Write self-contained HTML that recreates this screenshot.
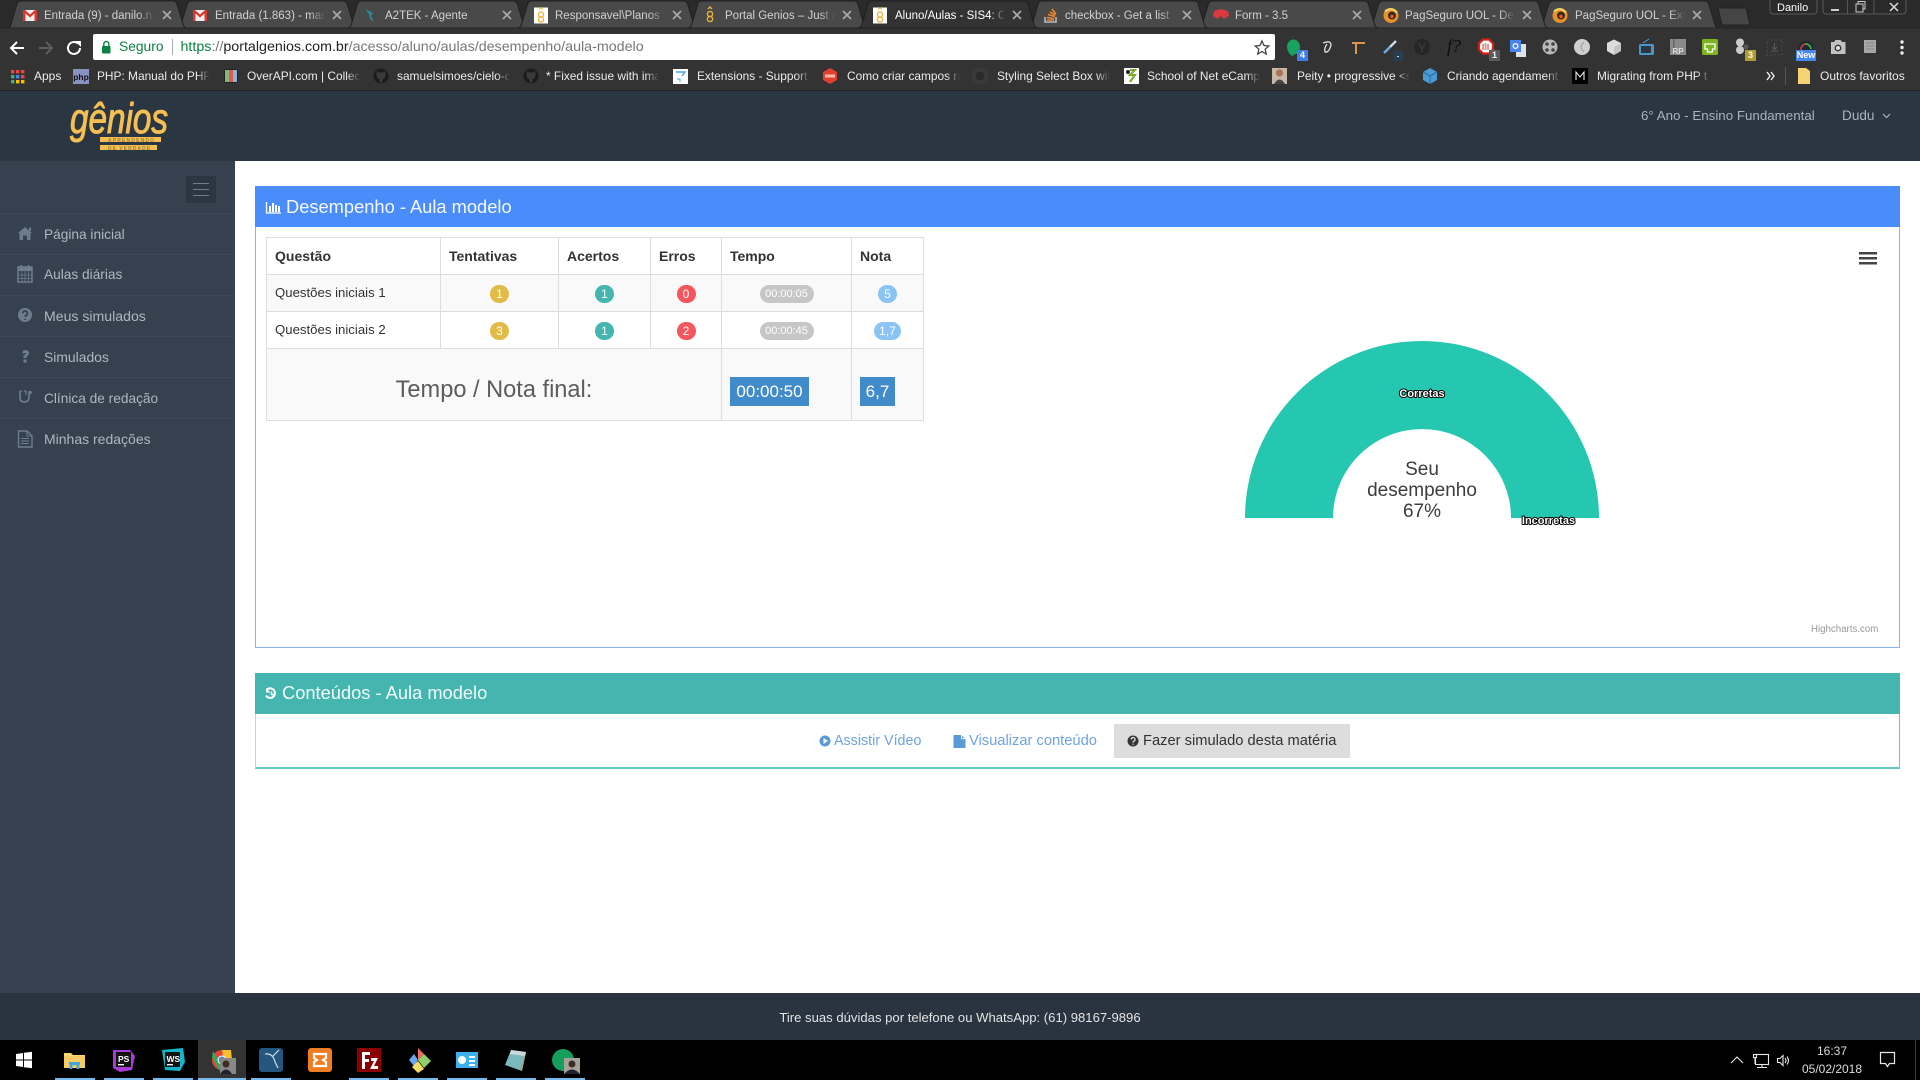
<!DOCTYPE html>
<html lang="pt-BR">
<head>
<meta charset="utf-8">
<title>Aluno/Aulas - SIS4</title>
<style>
html,body{margin:0;padding:0;width:1920px;height:1080px;overflow:hidden;background:#fff;font-family:"Liberation Sans",sans-serif;color:#333}
*{box-sizing:border-box}
.a{position:absolute}
.t{position:absolute;white-space:nowrap;line-height:20px;height:20px}
.tab{position:absolute;top:6px;width:110px;overflow:hidden;white-space:nowrap;font-size:11.5px;line-height:20px;height:20px;color:#d2d2d2;-webkit-mask-image:linear-gradient(to right,#000 86%,transparent);mask-image:linear-gradient(to right,#000 86%,transparent)}
.bm{position:absolute;top:66px;width:113px;overflow:hidden;white-space:nowrap;font-size:11.9px;line-height:20px;height:20px;color:#ececec;-webkit-mask-image:linear-gradient(to right,#000 88%,transparent);mask-image:linear-gradient(to right,#000 88%,transparent)}
.side{position:absolute;left:44px;font-size:13.7px;line-height:20px;color:#aeb6c1;white-space:nowrap}
.sep{position:absolute;left:0;width:235px;height:1px;background:#3d4957}
table{position:absolute;left:266px;top:237px;width:657px;border-collapse:collapse;table-layout:fixed;font-size:13.2px;color:#333}
td,th{border:1px solid #ddd;padding:0 8px;height:37px;text-align:left;vertical-align:middle}
th{font-size:14px;font-weight:bold;background:#fff}
.odd td{background:#f9f9f9}
.q{padding-bottom:2px}
.c{text-align:center;padding:0}
.b{display:inline-block;position:relative;top:1px;height:18px;line-height:18px;border-radius:9px;color:#fff;font-size:12px;text-align:center;vertical-align:middle}
.r{width:19px}
.y{background:#e2bb47}.g{background:#45b6af}.e{background:#f3565d}.u{background:#89c4f4}.p{background:#c6c6c6;width:54px;font-size:11px}
.box{display:block;background:#428bca;color:#fff;font-size:17px;height:29px;line-height:29px;text-align:center}
</style>
</head>
<body>

<!-- browser frame -->
<div class="a" style="left:0;top:0;width:1920px;height:28px;background:#2a2a2a"></div>
<div class="a" style="left:0;top:28px;width:1920px;height:63px;background:#333"></div>
<div class="a" style="left:0;top:90px;width:1920px;height:1px;background:#222"></div>

<!-- page -->
<div class="a" style="left:0;top:91px;width:1920px;height:70px;background:#2b3643"></div>
<div class="a" style="left:0;top:161px;width:235px;height:832px;background:#364150"></div>
<div class="a" style="left:0;top:993px;width:1920px;height:47px;background:#2a3340"></div>
<div class="a" style="left:0;top:1040px;width:1920px;height:40px;background:#000"></div>
<div class="a" style="left:198px;top:1040px;width:48px;height:40px;background:#333"></div>

<!-- address bar -->
<div class="a" style="left:93px;top:34px;width:1182px;height:26px;background:#fff;border-radius:2px"></div>

<!-- panels -->
<div class="a" style="left:255px;top:186px;width:1645px;height:462px;border:1px solid #8ab0ef"></div>
<div class="a" style="left:255px;top:186px;width:1645px;height:41px;background:#4b8cfb"></div>
<div class="a" style="left:255px;top:673px;width:1645px;height:96px;border:1px solid #c5d4d2;border-bottom:2px solid #63c9c0;border-right:1px solid #63c9c0"></div>
<div class="a" style="left:255px;top:673px;width:1645px;height:41px;background:#45b6af"></div>
<div class="a" style="left:1114px;top:724px;width:236px;height:34px;background:#ddd"></div>

<!-- sidebar -->
<div class="a" style="left:186px;top:176px;width:30px;height:27px;background:#2b3643"></div>
<div class="a" style="left:193px;top:183px;width:16px;height:1px;background:#6f7d8c"></div>
<div class="a" style="left:193px;top:189px;width:16px;height:1px;background:#6f7d8c"></div>
<div class="a" style="left:193px;top:195px;width:16px;height:1px;background:#6f7d8c"></div>
<div class="sep" style="top:213px"></div><div class="sep" style="top:254px"></div><div class="sep" style="top:295px"></div><div class="sep" style="top:336px"></div><div class="sep" style="top:377px"></div><div class="sep" style="top:418px"></div>
<div class="side" style="top:225px">Página inicial</div>
<div class="side" style="top:265px">Aulas diárias</div>
<div class="side" style="top:306px;font-size:14.1px">Meus simulados</div>
<div class="side" style="top:347px;font-size:13.9px">Simulados</div>
<div class="side" style="top:389px">Clínica de redação</div>
<div class="side" style="top:429px;font-size:14px">Minhas redações</div>

<!-- all icons / shapes -->
<svg class="a" style="left:0;top:0" width="1920" height="1080" viewBox="0 0 1920 1080" xmlns="http://www.w3.org/2000/svg">
<defs>
<path id="tb" d="M0,28 Q3,28 4,24 L10,4 Q11,1 14,1 L166,1 Q169,1 170,4 L176,24 Q177,28 180,28Z"/>
<g id="x"><path d="M-4,-4L4,4M4,-4L-4,4" stroke="#a8a8a8" stroke-width="1.7" fill="none"/></g>
<g id="gm"><rect x="-7" y="-5.5" width="14" height="11" fill="#eee"/><path d="M-7,-5.5V5.5H-4.5V-2L0,2L4.5,-2V5.5H7V-5.5H5L0,-1L-5,-5.5Z" fill="#d8392c"/></g>
<g id="gn"><rect x="-7" y="-8" width="14" height="16" fill="#fff"/><circle cy="-1" r="2.6" fill="none" stroke="#eeb53e" stroke-width="1.4"/><circle cy="4" r="2.6" fill="none" stroke="#eeb53e" stroke-width="1.4"/><path d="M-2,-6L0,-8L2,-6" stroke="#eeb53e" fill="none"/></g>
<g id="pg"><circle r="7.5" fill="#e8932a"/><circle cx="1" r="4" fill="#3a2a1c"/><path d="M-6,-4Q0,-9 6,-3" stroke="#f6d365" stroke-width="2" fill="none"/><circle cx="1" cy="1" r="1.7" fill="#ef5a28"/></g>
<g id="gh"><circle r="7.5" fill="#1c1c1c"/><path d="M-4,-5L-2,-3.5Q0,-4 2,-3.5L4,-5L4.5,-1Q4,3 1.5,3.5V6.5H-1.5V3.5Q-4,3 -4.5,-1Z" fill="#3a3a3a"/></g>
</defs>

<!-- tabs -->
<g fill="#494949" stroke="#1f1f1f" stroke-width="1">
<use href="#tb" x="1538.8"/><use href="#tb" x="1368.6"/><use href="#tb" x="1198.4"/><use href="#tb" x="1028.2"/>
<use href="#tb" x="177.2"/><use href="#tb" x="347.4"/><use href="#tb" x="517.6"/><use href="#tb" x="687.8"/><use href="#tb" x="7"/>
</g>
<use href="#tb" x="858" fill="#333" stroke="#1f1f1f"/>
<path d="M1718,8L1746,8L1750,25L1722,25Z" fill="#454545" stroke="#222"/>
<rect x="0" y="27.5" width="858" height="1" fill="#252525"/><rect x="1038" y="27.5" width="882" height="1" fill="#252525"/>

<use href="#gm" x="30" y="15.5"/><use href="#gm" x="200" y="15.5"/>
<path d="M365,9L373,13L371,16L374,22L370,19L369,14Z" fill="#2a8a9a"/>
<use href="#gn" x="541" y="15.5"/>
<g fill="none" stroke="#e9b23a" stroke-width="1.4"><circle cx="710" cy="14" r="2.6"/><circle cx="710" cy="19" r="2.6"/><path d="M708,9L710,7L712,9"/></g>
<use href="#gn" x="880" y="15.5"/>
<g fill="none" stroke="#e8852c" stroke-width="1.6"><path d="M1045,17V22H1056V17" stroke="#bcbbbb"/><path d="M1047,20H1054M1047,17.5L1054,18.5M1048,14.5L1055,16.5M1050,12L1055.5,15M1052,9L1056,14"/></g>
<path d="M1214,11L1221,9L1228,11L1229,16L1224,19L1221,16L1217,19L1213,16Z" fill="#d83a3f"/>
<use href="#pg" x="1391" y="15.5"/><use href="#pg" x="1560" y="15.5"/>

<use href="#x" x="167" y="15"/><use href="#x" x="337" y="15"/><use href="#x" x="507" y="15"/><use href="#x" x="677" y="15"/><use href="#x" x="847" y="15"/><use href="#x" x="1017" y="15"/><use href="#x" x="1187" y="15"/><use href="#x" x="1357" y="15"/><use href="#x" x="1527" y="15"/><use href="#x" x="1697" y="15"/>

<!-- window controls -->
<rect x="1770" y="-2" width="47" height="16" rx="3" fill="#2a2a2a" stroke="#5a5a5a"/>
<rect x="1823" y="-2" width="83" height="16" rx="3" fill="#2a2a2a" stroke="#5a5a5a"/>
<path d="M1847.5,0V14M1874,0V14" stroke="#555"/>
<rect x="1831" y="9" width="8" height="2" fill="#ccc"/>
<rect x="1856" y="4" width="7" height="8" fill="none" stroke="#ccc"/><path d="M1858,4V1.5H1865V9H1863" fill="none" stroke="#ccc"/>
<path d="M1890,3L1898,11M1898,3L1890,11" stroke="#ddd" stroke-width="1.5"/>

<!-- nav -->
<path d="M24,48H12M17,42L11,48L17,54" fill="none" stroke="#fff" stroke-width="2"/>
<path d="M39,48H51M46,42L52,48L46,54" fill="none" stroke="#5e5e5e" stroke-width="2"/>
<path d="M80,48A6,6 0 1 1 78,43.5" fill="none" stroke="#fff" stroke-width="2"/><path d="M75,41H81V47Z" fill="#fff"/>
<rect x="102" y="46" width="8.5" height="7.5" rx="1" fill="#0b8043"/><path d="M103.8,46V44A2.5,2.5 0 0 1 108.8,44V46" fill="none" stroke="#0b8043" stroke-width="1.4"/>
<rect x="172" y="39" width="1" height="16" fill="#aaa"/>
<path d="M1262,41L1264,45.5L1268.8,46L1265.2,49.2L1266.2,54L1262,51.5L1257.8,54L1258.8,49.2L1255.2,46L1260,45.5Z" fill="none" stroke="#444" stroke-width="1.3"/>

<!-- extensions -->
<path d="M1287,47A6.5,7.5 0 1 1 1293,54.5L1294,56.5Q1288,55 1287,47Z" fill="#1ba261"/>
<rect x="1297" y="50" width="11" height="11" fill="#3f7ee8"/>
<path d="M1323,43Q1331,40 1331,45Q1329,53 1325,52Q1324,48 1327,44" fill="none" stroke="#eee" stroke-width="1.2"/>
<path d="M1352,43H1365M1356,43V54" fill="none" stroke="#d9964f" stroke-width="2"/>
<path d="M1384,53L1396,41" stroke="#6ea9e0" stroke-width="2.4"/><path d="M1390,47L1396,41" stroke="#ddd" stroke-width="2"/>
<rect x="1393" y="51" width="10" height="10" fill="#2b3d52"/><rect x="1397" y="56" width="2" height="1" fill="#ccc"/>
<circle cx="1422" cy="47" r="8" fill="#262626"/><path d="M1419,43L1422,50L1425,43M1422,50V52" stroke="#3a3a3a" stroke-width="1.4" fill="none"/>
<path d="M1489,39.5H1483L1479,43.5V49.5L1483,53.5H1489L1493,49.5V43.5Z" fill="#fff" stroke="#d6201a" stroke-width="2.2"/><path d="M1483,50V44M1485.5,50V43M1488,50V44" stroke="#d8928c" stroke-width="1.8"/>
<rect x="1489" y="50" width="11" height="11" fill="#5a5a5a"/>
<rect x="1516" y="44" width="10" height="13" fill="#dfe3e6"/><rect x="1510" y="40" width="11" height="12" fill="#4a84ee"/><circle cx="1515.5" cy="46" r="2.4" fill="none" stroke="#fff" stroke-width="1.2"/>
<circle cx="1550" cy="47" r="7.5" fill="#b9b9b9"/><circle cx="1547" cy="44" r="1.8" fill="#444"/><circle cx="1553" cy="44" r="1.8" fill="#444"/><circle cx="1547" cy="50" r="1.8" fill="#444"/><circle cx="1553" cy="50" r="1.8" fill="#444"/>
<circle cx="1582" cy="47" r="8" fill="#cfcfcf"/><path d="M1584,42Q1578,47 1584,52" stroke="#999" fill="none"/>
<path d="M1614,39.5L1621,43V51L1614,55L1607,51V43Z" fill="#dcdcdc"/><path d="M1614,47V55L1621,51V43Z" fill="#c4c4c4"/>
<rect x="1639" y="44" width="15" height="11" rx="1.5" fill="#4a96c4"/><rect x="1641" y="46" width="10" height="7" fill="#2b3640"/><path d="M1643,43L1646,41L1649,39" stroke="#4ba3d6" fill="none"/>
<rect x="1670" y="39" width="16" height="16" fill="#8a8a8a"/><rect x="1673" y="39" width="1.5" height="16" fill="#666"/>
<rect x="1702" y="39" width="16" height="16" rx="1.5" fill="#7cb51f"/><path d="M1705,44H1715V49H1712.5V52H1707.5V49H1705Z" fill="none" stroke="#fff" stroke-width="1.3"/>
<circle cx="1740" cy="42.5" r="4" fill="#ccc"/><circle cx="1740" cy="50" r="4" fill="#ccc"/><circle cx="1746" cy="47" r="2.6" fill="#555"/>
<rect x="1745" y="50" width="11" height="11" fill="#b19a32"/>
<rect x="1767" y="40" width="15" height="15" fill="none" stroke="#4e4e4e" stroke-dasharray="2 2"/><path d="M1774.5,43V49M1772,47L1774.5,49.5L1777,47M1771,51H1778" fill="none" stroke="#5a5a5a"/>
<path d="M1799,51A7.5,7.5 0 1 1 1813,51Z" fill="#1f2a34"/><path d="M1801,50A5.5,5.5 0 0 1 1805,44" stroke="#e23b3b" stroke-width="1.6" fill="none"/><path d="M1805,44A5.5,5.5 0 0 1 1811,49" stroke="#45b649" stroke-width="1.6" fill="none"/>
<rect x="1796" y="50" width="20" height="11" fill="#4688ee"/>
<path d="M1831,42H1834L1835.5,40H1840.5L1842,42H1845.5V54H1831Z" fill="#c2c2c2"/><circle cx="1838" cy="48" r="3.4" fill="#333"/><circle cx="1838" cy="48" r="2" fill="#e2e2e2"/>
<rect x="1864" y="40" width="12" height="13" fill="#a6a6a6"/><path d="M1866,43H1874M1866,46H1874M1866,49H1874" stroke="#888"/>
<circle cx="1902" cy="42" r="1.7" fill="#eee"/><circle cx="1902" cy="47.5" r="1.7" fill="#eee"/><circle cx="1902" cy="53" r="1.7" fill="#eee"/>

<!-- bookmarks icons -->
<g><rect x="11" y="70" width="3.4" height="3.4" fill="#e44"/><rect x="16" y="70" width="3.4" height="3.4" fill="#e44"/><rect x="21" y="70" width="3.4" height="3.4" fill="#e44"/><rect x="11" y="75" width="3.4" height="3.4" fill="#4a8"/><rect x="16" y="75" width="3.4" height="3.4" fill="#48e"/><rect x="21" y="75" width="3.4" height="3.4" fill="#e44"/><rect x="11" y="80" width="3.4" height="3.4" fill="#4a8"/><rect x="16" y="80" width="3.4" height="3.4" fill="#fb0"/><rect x="21" y="80" width="3.4" height="3.4" fill="#fb0"/></g>
<rect x="73" y="69" width="16" height="15" fill="#8892bf"/>
<text x="81" y="80" text-anchor="middle" font-family="'Liberation Sans',sans-serif" font-size="8.5" font-weight="bold" fill="#111">php</text>
<rect x="224" y="69" width="14" height="14" rx="2" fill="#222"/><rect x="225" y="70" width="4" height="12" fill="#7fb77e"/><rect x="229" y="70" width="4" height="12" fill="#e05a50"/><rect x="233" y="70" width="4" height="12" fill="#8fb4d8"/>
<use href="#gh" x="381" y="76"/><use href="#gh" x="531" y="76"/>
<rect x="673" y="69" width="15" height="15" fill="#fff"/><path d="M676,72H685L682,76" stroke="#4aa3df" stroke-width="1.4" fill="none"/><path d="M677,79H680V82" stroke="#4aa3df" fill="none"/>
<path d="M830,68L837,72V80L830,84L823,80V72Z" fill="#e0402e"/><rect x="825" y="74.5" width="10" height="3" fill="#f7b7a8"/>
<circle cx="980" cy="76" r="8" fill="#3a3a3a"/><circle cx="980" cy="76" r="4.5" fill="#2b2b2b"/>
<rect x="1124" y="68" width="15" height="16" fill="#fff"/><path d="M1130,70H1135L1130,75H1135L1130,82" stroke="#7ca82b" stroke-width="2" fill="none"/><circle cx="1128" cy="72" r="2" fill="#222"/>
<rect x="1272" y="68" width="15" height="16" fill="#c8b8a8"/><circle cx="1279.5" cy="73" r="3.6" fill="#a8735a"/><path d="M1274,84Q1279.5,75 1285,84Z" fill="#444"/>
<path d="M1430,68L1437,72V80L1430,84L1423,80V72Z" fill="#4a9ad4"/><path d="M1423,72L1430,76L1437,72M1430,76V84" stroke="#2a6690" fill="none"/>
<rect x="1572" y="68" width="16" height="16" fill="#000"/><path d="M1576,80V72L1580,77L1584,72V80" stroke="#fff" fill="none"/>
<path d="M1767,72L1770,76L1767,80M1771,72L1774,76L1771,80" fill="none" stroke="#eee" stroke-width="1.4"/>
<rect x="1785" y="67" width="1" height="18" fill="#555"/>
<path d="M1798,68H1806L1810,71V84H1798Z" fill="#f4d373"/>

<!-- logo -->
<g fill="#f5bf52" stroke="#f5bf52">
<text x="70" y="133" font-family="'Liberation Sans',sans-serif" font-style="italic" font-size="43" stroke-width="1" textLength="98" lengthAdjust="spacingAndGlyphs">gênios</text>
<rect x="100" y="137" width="61" height="5" stroke="none"/><rect x="100" y="145" width="57" height="5" stroke="none"/>
</g>
<g fill="#9a7f38" font-family="'Liberation Sans',sans-serif" font-size="5" font-weight="bold">
<text x="108" y="142" textLength="46">APRENDENDO</text><text x="108" y="150" textLength="42">DE VERDADE</text>
</g>

<!-- sidebar icons -->
<g fill="#6e7d8e">
<path d="M25,227L32,233V232L32,233H30.5V240H27V235.5H23V240H19.5V233H18Z"/><rect x="29" y="227.5" width="2" height="3.5"/>
<path d="M18,267H32V282H18Z" fill="none" stroke="#6e7d8e" stroke-width="1.5"/><rect x="18" y="267" width="14" height="4"/><rect x="20.5" y="265" width="1.8" height="4"/><rect x="27.7" y="265" width="1.8" height="4"/><path d="M18,275H32M18,278.5H32M22,271V282M25,271V282M28.5,271V282" stroke="#6e7d8e" stroke-width=".8"/>
<circle cx="25" cy="315" r="7"/>
<path d="M22.5,353.5Q22.5,350 25.5,350Q29,350 29,353Q29,355 26.5,356.5V358H23.5V355.5Q26,354.5 26,353Q25,352 24.5,353.5ZM23.5,359.5H26.5V362.5H23.5Z"/>
<path d="M20,391V397Q20,402 24,402Q29,402 29,397V394" fill="none" stroke="#6e7d8e" stroke-width="1.6"/><path d="M20,391H22M26,391H24M26,391V395" fill="none" stroke="#6e7d8e" stroke-width="1.2"/><circle cx="30" cy="392.5" r="1.8"/>
<path d="M18.5,431H27L32,436V447H18.5Z" fill="none" stroke="#6e7d8e" stroke-width="1.4"/><path d="M27,431V436H32M21,438.5H29M21,441H29M21,443.5H29" fill="none" stroke="#6e7d8e" stroke-width="1"/>
</g>
<path d="M22.8,313.2A2.3,2.3 0 1 1 26.3,315.2Q25.2,315.8 25.2,317M25.1,319V320" fill="none" stroke="#364150" stroke-width="1.8"/>

<!-- panel icons -->
<path d="M266.5,202V213H281" fill="none" stroke="#fff" stroke-width="1.3"/><path d="M269,206h2v6h-2zM272,203h2v9h-2zM275,205h2v7h-2zM278,206h2v6h-2z" fill="#fff"/>
<path d="M267,689.5A4.8,4.8 0 1 1 266,695.5" fill="none" stroke="#fff" stroke-width="2"/><path d="M266,688V692.5H270.5Z" fill="#fff"/><path d="M271.5,691.5V694.5H274" fill="none" stroke="#fff" stroke-width="1.4"/>

<!-- button icons -->
<circle cx="825" cy="741" r="5.5" fill="#5b9bd5"/><path d="M823.5,738L828,741L823.5,744Z" fill="#fff"/>
<path d="M953.5,735H961L965.5,739V748H953.5Z" fill="#5b9bd5"/><path d="M961.5,735V738.7H965.5" stroke="#fff" fill="none" stroke-width=".8"/>
<circle cx="1133" cy="741" r="5.5" fill="#333"/><path d="M1131.2,739.5A1.9,1.9 0 1 1 1133.8,741.2Q1133,741.7 1133,742.7M1133,743.8V744.8" stroke="#ddd" stroke-width="1.3" fill="none"/>

<!-- chart -->
<path d="M1245,518A177,177 0 0 1 1599,518H1511A89,89 0 0 0 1333,518Z" fill="#25c7b0"/>
<rect x="1859" y="252" width="18" height="2.5" fill="#444"/><rect x="1859" y="257" width="18" height="2.5" fill="#444"/><rect x="1859" y="262" width="18" height="2.5" fill="#444"/>
<g font-family="'Liberation Sans',sans-serif" font-size="11" font-weight="bold" text-anchor="middle" fill="#fff" stroke="#000" stroke-width="2" paint-order="stroke" stroke-linejoin="round">
<text x="1422" y="397">Corretas</text><text x="1548.5" y="524">Incorretas</text>
</g>

<!-- taskbar -->
<g fill="#fff"><path d="M16,1054L23,1053V1059.5H16ZM24,1052.8L32,1051.7V1059.5H24ZM16,1060.5H23V1067L16,1066ZM24,1060.5H32V1068.3L24,1067.2Z"/></g>
<path d="M64,1053H71L73,1055H85V1068H64Z" fill="#f7d774"/><rect x="64" y="1056" width="21" height="12" fill="#f3c75a" opacity=".6"/><path d="M71,1069V1064H78V1069" fill="none" stroke="#3fa7e0" stroke-width="2.6"/><rect x="69" y="1062" width="11" height="2.6" fill="#3fa7e0"/>
<path d="M113,1050L130,1050L135,1056L132,1070L120,1072L113,1068Z" fill="#a83cd8"/><rect x="116" y="1052" width="15" height="15" fill="#111"/><rect x="118" y="1064" width="6" height="1.4" fill="#fff"/>
<text x="118" y="1062" font-family="'Liberation Sans',sans-serif" font-size="8.5" font-weight="bold" fill="#fff">PS</text>
<path d="M162,1050L183,1048L185,1062L180,1071L165,1070Z" fill="#12b7c9"/><rect x="165" y="1052" width="15" height="15" fill="#111"/><rect x="167" y="1064" width="6" height="1.4" fill="#fff"/>
<text x="166.5" y="1062" font-family="'Liberation Sans',sans-serif" font-size="8.5" font-weight="bold" fill="#fff">WS</text>
<circle cx="222" cy="1060" r="10" fill="#e2463a"/><path d="M212,1057L219,1070H225L213,1051Z" fill="#35a853"/><path d="M222,1050H231L232,1060L224,1062Z" fill="#fbc02d"/><circle cx="222" cy="1060" r="4" fill="#4285f4" stroke="#fff"/>
<rect x="220" y="1058" width="16" height="16" fill="#888"/><circle cx="226" cy="1064" r="3.5" fill="#3e2c22"/><path d="M220,1074Q226,1065 232,1074Z" fill="#1e2330"/>
<rect x="259" y="1048" width="24" height="24" rx="3" fill="#24577e"/><path d="M265,1054Q273,1053 275,1062Q277,1066 278,1068M273,1056L279,1050" fill="none" stroke="#cfe0ec" stroke-width="1.2"/>
<rect x="308" y="1048" width="24" height="24" rx="3" fill="#ef7d21"/><path d="M314,1054H326V1058L323,1060L326,1062V1066H314V1062L317,1060L314,1058Z" fill="none" stroke="#fff" stroke-width="2.2"/>
<rect x="357" y="1048" width="24" height="24" fill="#8b0000"/><path d="M362,1052H370V1055H365V1059H369V1062H365V1069H362Z" fill="#fff"/><path d="M371,1058H378L374,1066H378V1069H370L374,1061H371Z" fill="#fff"/>
<path d="M418,1048L424,1054L418,1060Z" fill="#f26a5a"/><path d="M424,1054L431,1061L424,1068L418,1060Z" fill="#8ecf6a"/><path d="M409,1060L414,1054L418,1060L414,1066Z" fill="#6aa7f0"/><path d="M412,1067L418,1061L424,1069L418,1073Z" fill="#f8dc6a"/>
<rect x="456" y="1052" width="22" height="16" fill="#3fb0ee"/><circle cx="462" cy="1060" r="4" fill="#fff"/><rect x="469" y="1056" width="6" height="2" fill="#fff"/><rect x="469" y="1060" width="6" height="2" fill="#fff"/><rect x="469" y="1064" width="6" height="2" fill="#fff"/>
<path d="M511,1050L526,1052L522,1071L505,1065Z" fill="#7ab9bd"/><path d="M511,1050L526,1052L525,1056L510,1054Z" fill="#c9d9da"/><path d="M526,1052L522,1071L520,1070Z" fill="#b0a080"/>
<circle cx="563" cy="1060" r="11" fill="#14a05c"/><rect x="564" y="1058" width="16" height="16" fill="#a7a39c"/><circle cx="572" cy="1064" r="3.5" fill="#3e2c22"/><path d="M564,1074Q572,1065 580,1074Z" fill="#1e2330"/>
<g fill="#76b9ed"><rect x="55" y="1078" width="40" height="2"/><rect x="104" y="1078" width="40" height="2"/><rect x="153" y="1078" width="40" height="2"/><rect x="198" y="1078" width="48" height="2"/><rect x="251" y="1078" width="40" height="2"/><rect x="349" y="1078" width="40" height="2"/><rect x="398" y="1078" width="40" height="2"/><rect x="447" y="1078" width="40" height="2"/><rect x="496" y="1078" width="40" height="2"/><rect x="545" y="1078" width="40" height="2"/></g>

<!-- tray -->
<g fill="none" stroke="#e8e8e8" stroke-width="1.1">
<path d="M1731,1063L1737,1057L1743,1063"/>
<rect x="1755.5" y="1054.5" width="13" height="10"/><path d="M1762,1065V1067M1757,1067.5H1767"/><rect x="1753.5" y="1054.5" width="3" height="3" fill="#000"/><path d="M1755,1058V1064"/>
<path d="M1777.5,1058.5H1780L1783,1055.5V1065.5L1780,1062.5H1777.5Z"/><path d="M1785,1058Q1787,1060.5 1785,1063M1787,1056.5Q1790,1060.5 1787,1064.5"/>
<path d="M1880.5,1052.5H1894.5V1063.5H1889.5L1887.5,1066.5L1885.5,1063.5H1880.5Z" stroke-width="1.2"/>
</g>
<rect x="1915" y="1040" width="1" height="40" fill="#3a3a3a"/>
</svg>

<!-- chrome text -->
<div class="tab" style="left:44px">Entrada (9) - danilo.nascimento</div>
<div class="tab" style="left:215px">Entrada (1.863) - mar</div>
<div class="tab" style="left:385px">A2TEK - Agente</div>
<div class="tab" style="left:555px">Responsavel\Planos</div>
<div class="tab" style="left:725px">Portal Genios – Just a</div>
<div class="tab" style="left:895px;color:#fff">Aluno/Aulas - SIS4: C</div>
<div class="tab" style="left:1065px">checkbox - Get a list</div>
<div class="tab" style="left:1235px">Form - 3.5</div>
<div class="tab" style="left:1405px">PagSeguro UOL - De</div>
<div class="tab" style="left:1575px">PagSeguro UOL - Ext</div>
<div class="t" style="left:1777px;top:-2px;font-size:11px;color:#fff">Danilo</div>

<div class="t" style="left:119px;top:37px;font-size:13.8px;color:#0b8043">Seguro</div>
<div class="t" style="left:180.5px;top:37px;font-size:14.28px;color:#777"><span style="color:#0b8043">https</span>://<span style="color:#222">portalgenios.com.br</span>/acesso/aluno/aulas/desempenho/aula-modelo</div>

<div class="t" style="left:34px;top:66px;font-size:12px;color:#ececec">Apps</div>
<div class="bm" style="left:97px">PHP: Manual do PHP</div>
<div class="bm" style="left:247px">OverAPI.com | Collecti</div>
<div class="bm" style="left:397px">samuelsimoes/cielo-c</div>
<div class="bm" style="left:546px">* Fixed issue with ima</div>
<div class="bm" style="left:697px">Extensions - Support</div>
<div class="bm" style="left:847px">Como criar campos ra</div>
<div class="bm" style="left:997px">Styling Select Box wit</div>
<div class="bm" style="left:1147px">School of Net eCamp</div>
<div class="bm" style="left:1297px">Peity • progressive &lt;s</div>
<div class="bm" style="left:1447px">Criando agendament</div>
<div class="bm" style="left:1597px">Migrating from PHP t</div>
<div class="t" style="left:1820px;top:66px;font-size:12px;color:#ececec">Outros favoritos</div>

<!-- extension badges -->
<div class="a" style="left:1297px;top:50px;width:11px;height:11px;font:bold 9px/11px 'Liberation Sans',sans-serif;color:#fff;text-align:center">4</div>
<div class="a" style="left:1489px;top:50px;width:11px;height:11px;font:bold 9px/11px 'Liberation Sans',sans-serif;color:#fff;text-align:center">1</div>
<div class="a" style="left:1670px;top:47px;width:16px;height:9px;font:bold 8px/9px 'Liberation Sans',sans-serif;color:#ddd;text-align:center">RP</div>
<div class="a" style="left:1745px;top:50px;width:11px;height:11px;font:bold 9px/11px 'Liberation Sans',sans-serif;color:#fff;text-align:center">3</div>
<div class="a" style="left:1796px;top:50px;width:20px;height:11px;font:bold 9px/11px 'Liberation Sans',sans-serif;color:#fff;text-align:center">New</div>
<div class="a" style="left:1447px;top:36px;font:italic 18px/20px 'Liberation Serif',serif;color:#0c0c0c">f?</div>

<!-- page header -->
<div class="t" style="left:1641px;top:106px;font-size:13.35px;color:#a9b3bf">6° Ano - Ensino Fundamental</div>
<div class="t" style="left:1842px;top:106px;font-size:13.6px;color:#a9b3bf">Dudu</div>
<svg class="a" style="left:1882px;top:112px" width="9" height="8"><path d="M1,2L4.5,5.5L8,2" fill="none" stroke="#a9b3bf" stroke-width="1.2"/></svg>

<!-- panel titles -->
<div class="t" style="left:286px;top:196px;font-size:18.3px;color:#f4f8ff;line-height:22px;height:22px">Desempenho - Aula modelo</div>
<div class="t" style="left:282px;top:682px;font-size:18.3px;color:#f2fbfa;line-height:22px;height:22px">Conteúdos - Aula modelo</div>

<!-- table -->
<table>
<colgroup><col style="width:174px"><col style="width:118px"><col style="width:92px"><col style="width:71px"><col style="width:130px"><col style="width:72px"></colgroup>
<tr><th>Questão</th><th>Tentativas</th><th>Acertos</th><th>Erros</th><th>Tempo</th><th>Nota</th></tr>
<tr class="odd"><td class="q">Questões iniciais 1</td><td class="c"><span class="b r y">1</span></td><td class="c"><span class="b r g">1</span></td><td class="c"><span class="b r e">0</span></td><td class="c"><span class="b p">00:00:05</span></td><td class="c"><span class="b r u">5</span></td></tr>
<tr><td class="q">Questões iniciais 2</td><td class="c"><span class="b r y">3</span></td><td class="c"><span class="b r g">1</span></td><td class="c"><span class="b r e">2</span></td><td class="c"><span class="b p">00:00:45</span></td><td class="c"><span class="b u" style="width:27px">1,7</span></td></tr>
<tr class="odd"><td colspan="4" class="c" style="height:72px;padding-top:12px;font-size:23.6px;color:#5c5c5c">Tempo / Nota final:</td><td style="padding-top:14px"><span class="box" style="width:79px">00:00:50</span></td><td style="padding-top:14px"><span class="box" style="width:35px">6,7</span></td></tr>
</table>

<!-- chart text -->
<div class="a" style="left:1322px;top:459px;width:200px;text-align:center;font-size:19px;line-height:21px;color:#3c3c3c">Seu<br>desempenho<br>67%</div>
<div class="t" style="left:1811px;top:620px;font-size:9.7px;color:#999">Highcharts.com</div>

<!-- buttons -->
<div class="t" style="left:834px;top:731px;font-size:14.3px;color:#6da3e0">Assistir Vídeo</div>
<div class="t" style="left:969px;top:731px;font-size:14.7px;color:#6da3e0">Visualizar conteúdo</div>
<div class="t" style="left:1143px;top:731px;font-size:14.7px;color:#333">Fazer simulado desta matéria</div>

<!-- footer -->
<div class="a" style="left:0;top:1008px;width:1920px;text-align:center;font-size:13.1px;line-height:20px;color:#e4e4e4">Tire suas dúvidas por telefone ou WhatsApp: (61) 98167-9896</div>

<!-- clock -->
<div class="a" style="left:1792px;top:1043px;width:80px;text-align:center;font-size:12px;line-height:16px;color:#ddd">16:37</div>
<div class="a" style="left:1792px;top:1061px;width:80px;text-align:center;font-size:12px;line-height:16px;color:#ddd">05/02/2018</div>

</body>
</html>
